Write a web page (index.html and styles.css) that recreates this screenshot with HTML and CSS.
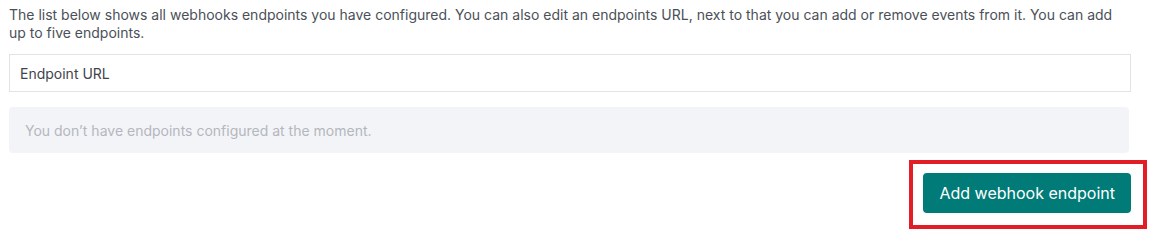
FILE: index.html
```html
<!DOCTYPE html>
<html lang="en">
<head>
<meta charset="utf-8">
<title>Webhooks</title>
<link rel="stylesheet" href="styles.css">
</head>
<body>
<main class="panel">
  <p class="intro">The list below shows all webhooks endpoints you have configured. You can also edit an endpoints URL, next to that you can add or remove events from it. You can add up to five endpoints.</p>
  <div class="url-field">Endpoint URL</div>
  <div class="empty">You don’t have endpoints configured at the moment.</div>
  <div class="actions">
    <div class="btn-wrap">
      <button class="btn-primary" type="button">Add webhook endpoint</button>
      <span class="highlight"></span>
    </div>
  </div>
</main>
</body>
</html>
```
FILE: styles.css
```css
html, body {
  margin: 0;
  padding: 0;
  background: #ffffff;
}
body {
  font-family: Inter, "Noto Sans", "Liberation Sans", sans-serif;
  color: #4b5058;
  min-height: 245px;
}
.panel {
  width: 1122px;
  padding: 6px 0 32px 9px;
  display: flex;
  flex-direction: column;
}
.intro {
  margin: 0;
  font-size: 14px;
  line-height: 17.5px;
}
.url-field {
  margin-top: 13px;
  height: 36px;
  border: 1px solid #e2e3e5;
  display: flex;
  align-items: center;
  padding-left: 10px;
  font-size: 14px;
  color: #3f444c;
}
.empty {
  margin-top: 15px;
  width: 1120px;
  height: 46px;
  border-radius: 4px;
  background: #f3f4f8;
  display: flex;
  align-items: center;
  padding-left: 16px;
  box-sizing: border-box;
  font-size: 14px;
  color: #b4b7bd;
}
.actions {
  display: flex;
  justify-content: flex-end;
  margin-top: 20px;
}
.btn-wrap {
  position: relative;
  display: flex;
}
.btn-primary {
  height: 40px;
  padding: 0 16px;
  border: none;
  border-radius: 4px;
  background: #007b77;
  color: #ffffff;
  font-family: Inter, "Noto Sans", "Liberation Sans", sans-serif;
  font-size: 16px;
  cursor: pointer;
}
.highlight {
  position: absolute;
  left: -14px;
  right: -16px;
  top: -13px;
  bottom: -16px;
  border: 4px solid #e31d25;
  pointer-events: none;
}
```
